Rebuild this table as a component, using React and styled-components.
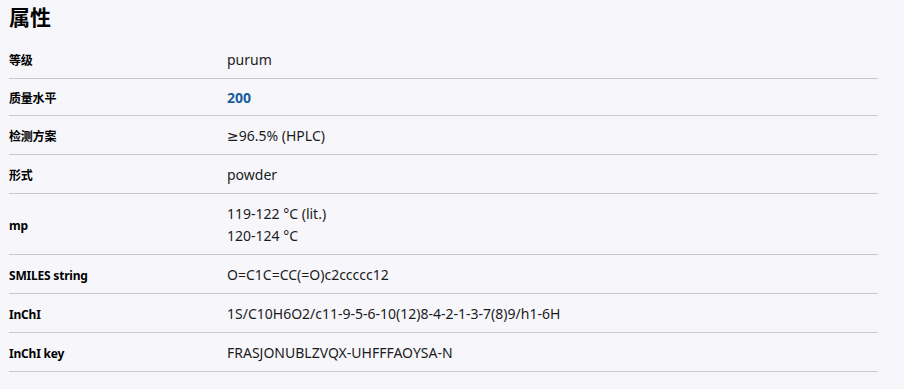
import React from 'react';
import styled, { createGlobalStyle } from 'styled-components';

const GlobalStyle = createGlobalStyle`
  body {
    margin: 0;
    background: #f7f7fb;
    font-family: "Noto Sans", "DejaVu Sans", "Noto Sans CJK SC", sans-serif;
    color: #1b1b1b;
  }
`

const Section = styled.section`
  padding-left: 9px;
  width: 869px;
`
const Title = styled.h2`
  margin: 0 0 9px;
  padding-top: 3px;
  font-size: 21px;
  line-height: 28px;
  font-weight: 700;
  color: #000;
`
const Row = styled.div`
  display: grid;
  grid-template-columns: 218px 1fr;
  align-items: center;
  padding: 9px 0 7px;
  border-bottom: 1px solid #c9c9cd;
`
const Label = styled.div`
  font-size: 12px;
  font-weight: 700;
  color: #000;
  letter-spacing: -0.2px;
`
const Value = styled.div`
  font-size: 14px;
  line-height: ${props => props.link ? '20px' : '22px'};
  color: ${props => props.link ? '#1a5d9c' : '#1b1b1b'};
  font-weight: ${props => props.link ? 700 : 400};
`

const rows = [
  { label: '等级', values: ['purum'] },
  { label: '质量水平', values: ['200'], link: true },
  { label: '检测方案', values: ['≥96.5% (HPLC)'] },
  { label: '形式', values: ['powder'] },
  { label: 'mp', values: ['119-122 °C (lit.)', '120-124 °C'] },
  { label: 'SMILES string', values: ['O=C1C=CC(=O)c2ccccc12'] },
  { label: 'InChI', values: ['1S/C10H6O2/c11-9-5-6-10(12)8-4-2-1-3-7(8)9/h1-6H'] },
  { label: 'InChI key', values: ['FRASJONUBLZVQX-UHFFFAOYSA-N'] },
];

export default function App() {
  return <>
    <GlobalStyle />
    <Section>
      <Title>属性</Title>
      {rows.map(row => (
        <Row key={row.label}>
          <Label>{row.label}</Label>
          <Value link={row.link}>
            {row.values.map(v => <div key={v}>{v}</div>)}
          </Value>
        </Row>
      ))}
    </Section>
  </>;
}
